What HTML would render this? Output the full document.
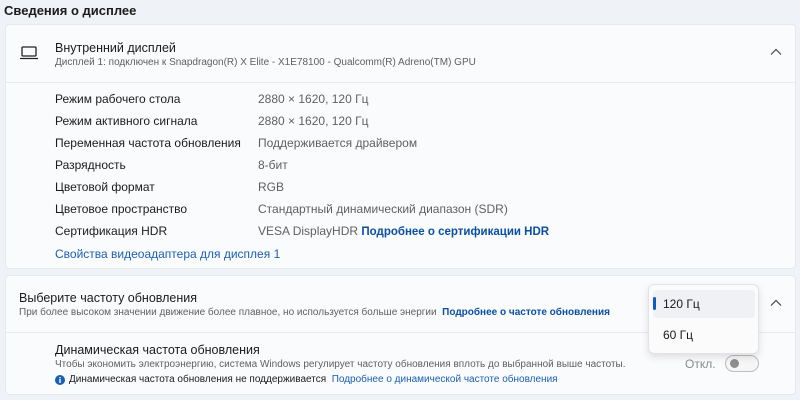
<!DOCTYPE html>
<html><head><meta charset="utf-8"><style>
*{margin:0;padding:0;box-sizing:border-box}
body{width:800px;height:400px;background:#eff2f7;font-family:"Liberation Sans","Noto Sans CJK SC",sans-serif;position:relative;overflow:hidden;color:#1b1b1b}
.a{position:absolute;white-space:nowrap}
.card{position:absolute;left:5px;width:791px;background:#fafbfd;border:1px solid #e6e8ec;border-radius:4px}
.l{font-size:12px;color:#1b1b1b}
.v{font-size:12px;color:#606060}
.s{font-size:10px;color:#606060}
.lk{color:#0b4fa3;font-weight:bold}
.ln{color:#1a5fb4}
</style></head><body>
<div class="a" style="left:4px;top:3px;font-size:13px;font-weight:bold">Сведения о дисплее</div>
<div class="card" style="top:24px;height:245px"></div>
<div class="a" style="left:5px;top:82px;width:791px;height:1px;background:#e8eaee"></div>
<svg class="a" style="left:19px;top:45px" width="20" height="16" viewBox="0 0 20 16"><rect x="3" y="2" width="14" height="9" rx="1" fill="none" stroke="#222" stroke-width="1.3"/><line x1="1" y1="13.5" x2="19" y2="13.5" stroke="#222" stroke-width="1.3"/></svg>
<div class="a l" style="left:55px;top:41px;font-size:12.5px">Внутренний дисплей</div>
<div class="a s" style="left:55px;top:57px">Дисплей 1: подключен к Snapdragon(R) X Elite - X1E78100 - Qualcomm(R) Adreno(TM) GPU</div>
<svg class="a" style="left:770px;top:48px" width="12" height="8" viewBox="0 0 12 8"><path d="M1 6.5L6 1.5L11 6.5" fill="none" stroke="#444" stroke-width="1.2"/></svg>
<div class="a l" style="left:55px;top:92px">Режим рабочего стола</div><div class="a v" style="left:258px;top:92px">2880 × 1620, 120 Гц</div>
<div class="a l" style="left:55px;top:114px">Режим активного сигнала</div><div class="a v" style="left:258px;top:114px">2880 × 1620, 120 Гц</div>
<div class="a l" style="left:55px;top:136px">Переменная частота обновления</div><div class="a v" style="left:258px;top:136px">Поддерживается драйвером</div>
<div class="a l" style="left:55px;top:158px">Разрядность</div><div class="a v" style="left:258px;top:158px">8-бит</div>
<div class="a l" style="left:55px;top:180px">Цветовой формат</div><div class="a v" style="left:258px;top:180px">RGB</div>
<div class="a l" style="left:55px;top:202px">Цветовое пространство</div><div class="a v" style="left:258px;top:202px">Стандартный динамический диапазон (SDR)</div>
<div class="a l" style="left:55px;top:224px">Сертификация HDR</div><div class="a v" style="left:258px;top:224px">VESA DisplayHDR <span class="lk" style="font-size:11.5px">Подробнее о сертификации HDR</span></div>
<div class="a l ln" style="left:55px;top:247px">Свойства видеоадаптера для дисплея 1</div>

<div class="card" style="top:275px;height:120px"></div>
<div class="a" style="left:5px;top:332px;width:791px;height:1px;background:#e8eaee"></div>
<div class="a l" style="left:19px;top:291px;font-size:12.5px">Выберите частоту обновления</div>
<div class="a s" style="left:19px;top:307px">При более высоком значении движение более плавное, но используется больше энергии&nbsp; <span class="lk">Подробнее о частоте обновления</span></div>
<svg class="a" style="left:770px;top:299px" width="12" height="8" viewBox="0 0 12 8"><path d="M1 6.5L6 1.5L11 6.5" fill="none" stroke="#444" stroke-width="1.2"/></svg>
<div class="a l" style="left:55px;top:343px;font-size:12.5px">Динамическая частота обновления</div>
<div class="a s" style="left:55px;top:359px">Чтобы экономить электроэнергию, система Windows регулирует частоту обновления вплоть до выбранной выше частоты.</div>
<svg class="a" style="left:55px;top:375px" width="10" height="10"><circle cx="5" cy="5" r="5" fill="#1a5fb4"/><rect x="4.3" y="4" width="1.4" height="4" fill="#fff"/><rect x="4.3" y="2" width="1.4" height="1.3" fill="#fff"/></svg>
<div class="a" style="left:69px;top:374px;font-size:10px;color:#1b1b1b">Динамическая частота обновления не поддерживается&nbsp; <span class="ln">Подробнее о динамической частоте обновления</span></div>
<div class="a" style="left:685px;top:357px;font-size:12px;color:#8a8a8a">Откл.</div>
<div class="a" style="left:725px;top:355px;width:34px;height:17px;border:1px solid #bdbdbd;border-radius:9px;background:#f6f6f6"></div>
<div class="a" style="left:730px;top:359px;width:9px;height:9px;border-radius:50%;background:#8d8d8d"></div>

<div class="a" style="left:648px;top:284px;width:111px;height:70px;background:#fbfbfc;border:1px solid #e3e3e3;border-radius:6px;box-shadow:0 3px 8px rgba(0,0,0,.12)"></div>
<div class="a" style="left:653px;top:290px;width:102px;height:28px;background:#f0f1f4;border-radius:4px"></div>
<div class="a" style="left:653px;top:297px;width:3px;height:13px;background:#0b5cc4;border-radius:2px"></div>
<div class="a l" style="left:663px;top:297px">120 Гц</div>
<div class="a l" style="left:663px;top:328px">60 Гц</div>
</body></html>
